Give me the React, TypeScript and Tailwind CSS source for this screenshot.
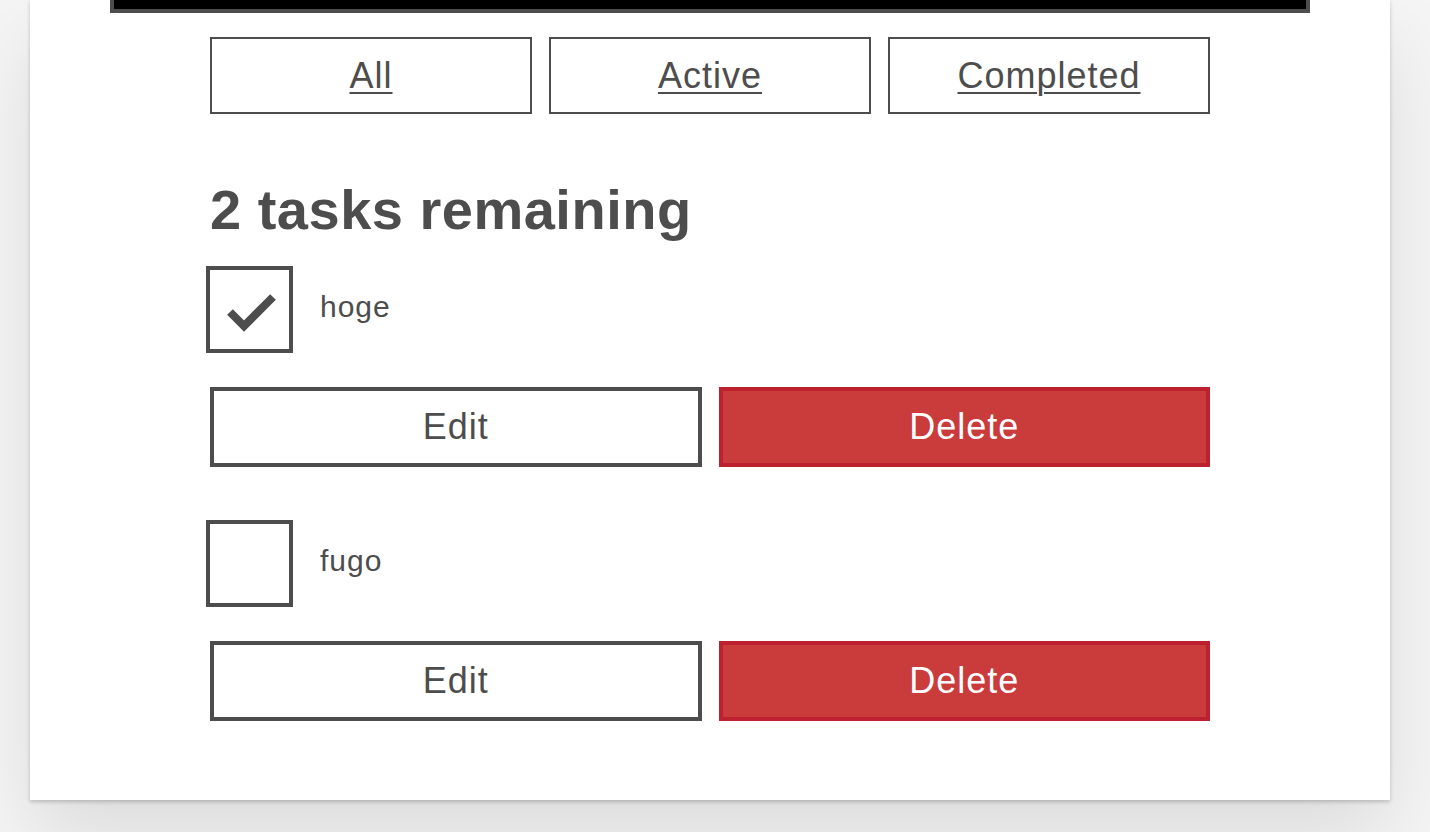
type Task = {
  id: string;
  name: string;
  completed: boolean;
};

const tasks: Task[] = [
  { id: "todo-0", name: "hoge", completed: true },
  { id: "todo-1", name: "fugo", completed: false },
];

const filters = ["All", "Active", "Completed"];

function CheckBox({ checked }: { checked: boolean }) {
  return (
    <div className="w-[87px] h-[87px] border-4 border-[#4d4d4d] bg-white shrink-0">
      {checked && (
        <svg width="79" height="79" viewBox="0 0 79 79">
          <path
            d="M20 42 L34 56 L63 27"
            fill="none"
            stroke="#4d4d4d"
            strokeWidth="8"
            strokeLinecap="butt"
            strokeLinejoin="miter"
          />
        </svg>
      )}
    </div>
  );
}

function TodoItem({ task }: { task: Task }) {
  return (
    <li className="mb-[53px]">
      <div className="flex items-center -ml-[4px]">
        <CheckBox checked={task.completed} />
        <label className="ml-[27px] pb-[6px] text-[30px] tracking-[1px] text-[#4d4d4d]">{task.name}</label>
      </div>
      <div className="grid grid-cols-2 gap-[17px] mt-[34px]">
        <button className="h-[80px] border-4 border-[#4d4d4d] bg-white text-[36px] tracking-[1px] text-[#4d4d4d]">
          Edit
        </button>
        <button className="h-[80px] border-4 border-[#bd2130] bg-[#ca3c3c] text-[36px] tracking-[1px] text-white">
          Delete
        </button>
      </div>
    </li>
  );
}

export default function App() {
  return (
    <div
      className="min-h-screen bg-[#f5f5f5] text-[#4d4d4d]"
      style={{ fontFamily: '"Liberation Sans", Arial, sans-serif' }}
    >
      <div className="ml-[30px] w-[1360px] h-[800px] bg-white shadow-[0_2px_4px_0_rgba(0,0,0,0.2),0_40px_80px_0_rgba(0,0,0,0.1)]">
        <div className="mx-[80px] h-[13px] bg-black border-x-4 border-b-4 border-[#4d4d4d]" />

        <div className="ml-[180px] w-[1000px]">
          <div className="grid grid-cols-3 gap-[17px] mt-[24px]">
            {filters.map((f) => (
              <button
                key={f}
                className="h-[77px] border-2 border-[#4d4d4d] bg-white text-[36px] tracking-[1px] underline underline-offset-[4px] decoration-2 text-[#4d4d4d]"
              >
                {f}
              </button>
            ))}
          </div>

          <h2 className="mt-[68px] text-[56px] leading-none tracking-[0.5px] font-bold">2 tasks remaining</h2>

          <ul className="mt-[28px]">
            {tasks.map((t) => (
              <TodoItem key={t.id} task={t} />
            ))}
          </ul>
        </div>
      </div>
    </div>
  );
}
